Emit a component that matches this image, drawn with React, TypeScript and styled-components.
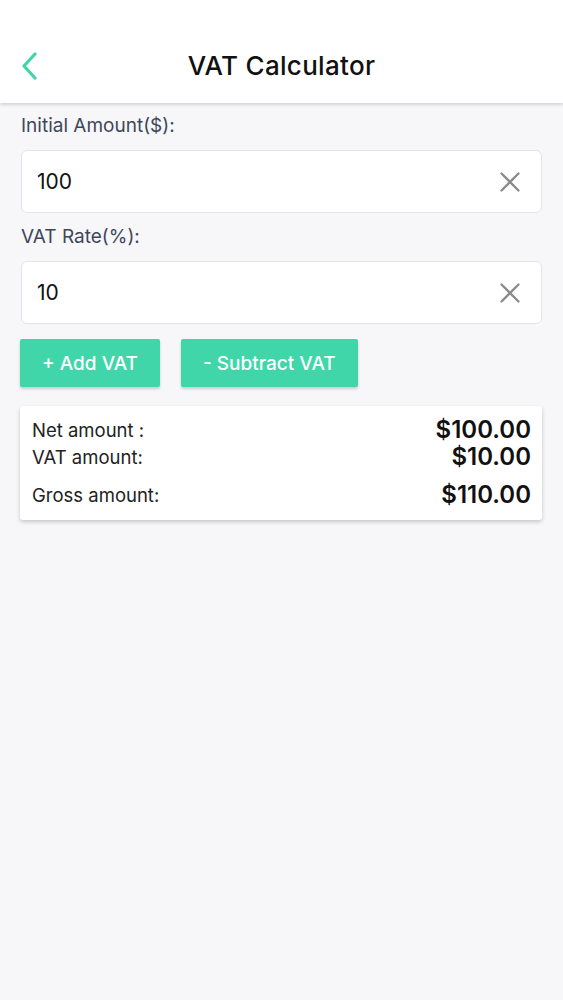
import React from "react";
import styled, { createGlobalStyle } from "styled-components";

const GlobalStyle = createGlobalStyle`
  html, body {
    margin: 0;
    padding: 0;
    background: #f7f7f9;
    font-family: Inter, "Noto Sans", "Liberation Sans", sans-serif;
  }
`;

const ChevronLeft = () => (
  <svg width="18" height="28" viewBox="0 0 18 28" fill="none">
    <path d="M14 2 L3 14 L14 26" stroke="#3fd5a8" strokeWidth="3.2" strokeLinecap="round" strokeLinejoin="round" />
  </svg>
);

const ClearIcon = () => (
  <svg width="20" height="20" viewBox="0 0 20 20" fill="none">
    <path d="M1.5 1.5 L18.5 18.5 M18.5 1.5 L1.5 18.5" stroke="#8a8a8a" strokeWidth="2.3" strokeLinecap="round" />
  </svg>
);

type FieldProps = {
  label: string;
  value: string;
};

const Field = ({ label, value }: FieldProps) => (
  <FieldDiv>
    <Label>{label}</Label>
    <InputBox>
      <InputText>{value}</InputText>
      <ClearBtn>
        <ClearIcon />
      </ClearBtn>
    </InputBox>
  </FieldDiv>
);

const rows = [
  { label: "Net amount :", value: "$100.00" },
  { label: "VAT amount:", value: "$10.00" },
  { label: "Gross amount:", value: "$110.00", gap: true },
];

const App = () => {
  return (
    <Page>
      <GlobalStyle />
      <Header>
        <BackBtn>
          <ChevronLeft />
        </BackBtn>
        <Title>VAT Calculator</Title>
      </Header>

      <Content>
        <Field label="Initial Amount($):" value="100" />
        <Field label="VAT Rate(%):" value="10" />

        <BtnRow>
          <ActionBtn>+ Add VAT</ActionBtn>
          <ActionBtn>- Subtract VAT</ActionBtn>
        </BtnRow>

        <ResultCard>
          {rows.map((r) => (
            <ResultRow key={r.label} $spaced={!!r.gap}>
              <ResultLabel>{r.label}</ResultLabel>
              <ResultValue>{r.value}</ResultValue>
            </ResultRow>
          ))}
        </ResultCard>
      </Content>
    </Page>
  );
};

export default App;

const Page = styled.div`
  min-height: 1000px;
  background: #f7f7f9;
`;

const Header = styled.div`
  height: 103px;
  background: #ffffff;
  box-shadow: 0 2px 3px rgba(0, 0, 0, 0.14);
  display: flex;
  align-items: flex-end;
  justify-content: center;
  position: relative;
  padding-bottom: 21px;
  box-sizing: border-box;
`;

const BackBtn = styled.div`
  position: absolute;
  left: 21px;
  top: 52px;
  display: flex;
`;

const Title = styled.div`
  font-size: 26px;
  font-weight: 500;
  color: #111111;
  letter-spacing: 0.3px;
  line-height: 32px;
`;

const Content = styled.div`
  padding: 10px 21px 0 21px;
  display: flex;
  flex-direction: column;
`;

const FieldDiv = styled.div`
  display: flex;
  flex-direction: column;
  margin-bottom: 12px;

  & + & {
    margin-top: -1px;
  }
`;

const Label = styled.div`
  font-size: 19px;
  color: #3e4759;
  line-height: 26px;
  margin-bottom: 11px;
`;

const InputBox = styled.div`
  height: 63px;
  background: #ffffff;
  border: 1px solid #e4e4e8;
  border-radius: 6px;
  box-sizing: border-box;
  display: flex;
  align-items: center;
  justify-content: space-between;
  padding: 0 21px 0 15px;
`;

const InputText = styled.div`
  font-size: 21px;
  color: #111111;
`;

const ClearBtn = styled.div`
  display: flex;
  align-items: center;
`;

const BtnRow = styled.div`
  display: flex;
  gap: 21px;
  margin: 3px 0 0 -1px;
`;

const ActionBtn = styled.div`
  height: 48px;
  padding: 0 22px;
  background: #40d6a9;
  color: #ffffff;
  font-size: 19px;
  font-weight: 500;
  border-radius: 2px;
  display: flex;
  align-items: center;
  box-shadow: 0 2px 3px rgba(0, 0, 0, 0.18);
`;

const ResultCard = styled.div`
  margin: 19px 0 0 -1px;
  width: 522px;
  background: #ffffff;
  border-radius: 3px;
  box-shadow: 0 2px 4px rgba(0, 0, 0, 0.2);
  padding: 10px 11px 12px 12px;
  box-sizing: border-box;
  display: flex;
  flex-direction: column;
`;

const ResultRow = styled.div<{ $spaced: boolean }>`
  display: flex;
  justify-content: space-between;
  align-items: center;
  height: 27px;
  margin-top: ${(p) => (p.$spaced ? "11px" : "0")};
`;

const ResultLabel = styled.div`
  font-size: 18.5px;
  color: #222222;
`;

const ResultValue = styled.div`
  font-size: 24px;
  font-weight: 600;
  color: #111111;
`;
